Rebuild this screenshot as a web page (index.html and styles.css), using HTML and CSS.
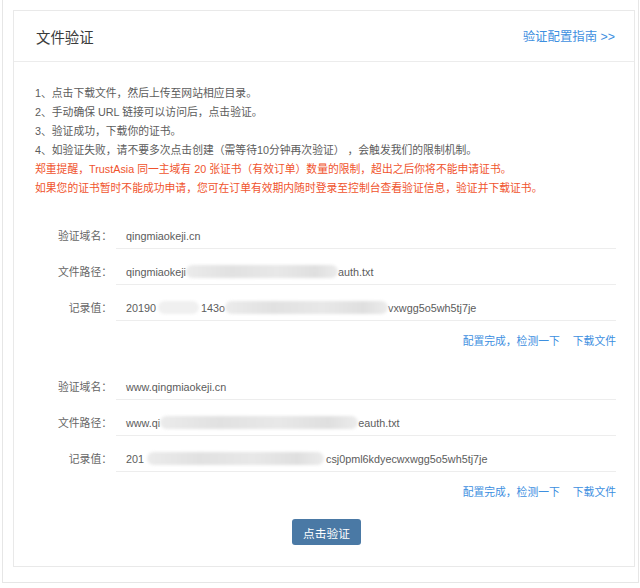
FILE: index.html
```html
<!DOCTYPE html>
<html lang="zh-CN">
<head>
<meta charset="utf-8">
<title>文件验证</title>
<link rel="stylesheet" href="styles.css">
</head>
<body>
<div class="frame">
  <div class="card">
    <div class="card-head">
      <span class="title">文件验证</span>
      <a class="guide" href="#">验证配置指南 &gt;&gt;</a>
    </div>
    <div class="card-body">
      <div class="tips">
        <p>1、点击下载文件，然后上传至网站相应目录。</p>
        <p>2、手动确保 URL 链接可以访问后，点击验证。</p>
        <p>3、验证成功，下载你的证书。</p>
        <p>4、如验证失败，请不要多次点击创建（需等待10分钟再次验证） ，会触发我们的限制机制。</p>
        <p class="warn">郑重提醒，TrustAsia 同一主域有 20 张证书（有效订单）数量的限制，超出之后你将不能申请证书。</p>
        <p class="warn">如果您的证书暂时不能成功申请，您可在订单有效期内随时登录至控制台查看验证信息，验证并下载证书。</p>
      </div>

      <div class="group">
        <div class="row">
          <span class="label">验证域名：</span>
          <span class="value">qingmiaokeji.cn</span>
        </div>
        <div class="row">
          <span class="label">文件路径：</span>
          <span class="value">qingmiaokeji<i class="blob b1"></i>auth.txt</span>
        </div>
        <div class="row">
          <span class="label">记录值：</span>
          <span class="value">20190<i class="blob b2"></i>143o<i class="blob b3"></i>vxwgg5o5wh5tj7je</span>
        </div>
      </div>
      <div class="actions">
        <a href="#">配置完成，检测一下</a>
        <a href="#">下载文件</a>
      </div>

      <div class="group second">
        <div class="row">
          <span class="label">验证域名：</span>
          <span class="value">www.qingmiaokeji.cn</span>
        </div>
        <div class="row">
          <span class="label">文件路径：</span>
          <span class="value">www.qi<i class="blob b4"></i>eauth.txt</span>
        </div>
        <div class="row">
          <span class="label">记录值：</span>
          <span class="value">201<i class="blob b5"></i>csj0pml6kdyecwxwgg5o5wh5tj7je</span>
        </div>
      </div>
      <div class="actions">
        <a href="#">配置完成，检测一下</a>
        <a href="#">下载文件</a>
      </div>

      <div class="submit">
        <button class="btn" type="button">点击验证</button>
      </div>
    </div>
  </div>
</div>
</body>
</html>
```

FILE: styles.css
```css
* { box-sizing: border-box; }

html, body {
  margin: 0;
  padding: 0;
  background: #ffffff;
}

body {
  font-family: "Liberation Sans", "Noto Sans CJK SC", sans-serif;
  font-size: 10.8px;
  color: #5c5c5c;
}

a { text-decoration: none; color: #3d8fdf; }

.frame {
  margin-left: 2px;
  width: 637px;
  padding: 10px 3px 15px 10px;
  border: 1px solid #e6e6e6;
  border-top: none;
}

.card {
  border: 1px solid #e9e9e9;
  padding-bottom: 21px;
}

.card-head {
  height: 51px;
  border-bottom: 1px solid #ececec;
  display: flex;
  align-items: center;
  justify-content: space-between;
  padding: 0 19px 0 22px;
}

.title {
  font-size: 14.4px;
  color: #3a3a3a;
}

.guide {
  font-size: 12.4px;
  color: #3d8fdf;
}

.card-body {
  padding: 22px 18px 0 0;
}

.tips {
  padding-left: 21px;
}

.tips p {
  margin: 0;
  line-height: 19px;
}

.tips .warn {
  color: #f0532d;
}

.group {
  margin-top: 15px;
}

.group.second {
  margin-top: 13px;
}

.row {
  display: grid;
  grid-template-columns: 98px 1fr;
  column-gap: 4px;
  height: 36px;
}

.label {
  text-align: right;
  color: #666666;
  padding-top: 13px;
  line-height: 20px;
}

.value {
  border-bottom: 1px solid #ededed;
  padding: 13px 0 0 10px;
  line-height: 20px;
  color: #5c5c5c;
  white-space: nowrap;
}

.blob {
  display: inline-block;
  height: 13px;
  vertical-align: -2px;
  border-radius: 7px;
  background: linear-gradient(90deg, #ebebeb, #e1e1e1 30%, #e8e8e8 60%, #dfdfdf 85%, #ececec);
  filter: blur(1.5px);
}

.b1 { width: 152px; }
.b2 { width: 41px; margin: 0 2px; background: #f0f0f0; }
.b3 { width: 163px; }
.b4 { width: 198px; }
.b5 { width: 177px; margin: 0 2px 0 3px; }

.actions {
  margin-top: 11px;
  line-height: 19px;
  display: flex;
  justify-content: flex-end;
  gap: 13px;
}

.submit {
  margin-top: 17px;
  display: flex;
  justify-content: center;
  padding-left: 23px;
}

.btn {
  width: 69px;
  height: 26px;
  border: none;
  border-radius: 3px;
  background: #4a79a5;
  color: #ffffff;
  font-family: "Liberation Sans", "Noto Sans CJK SC", sans-serif;
  font-size: 11.7px;
  padding: 0;
}
```
